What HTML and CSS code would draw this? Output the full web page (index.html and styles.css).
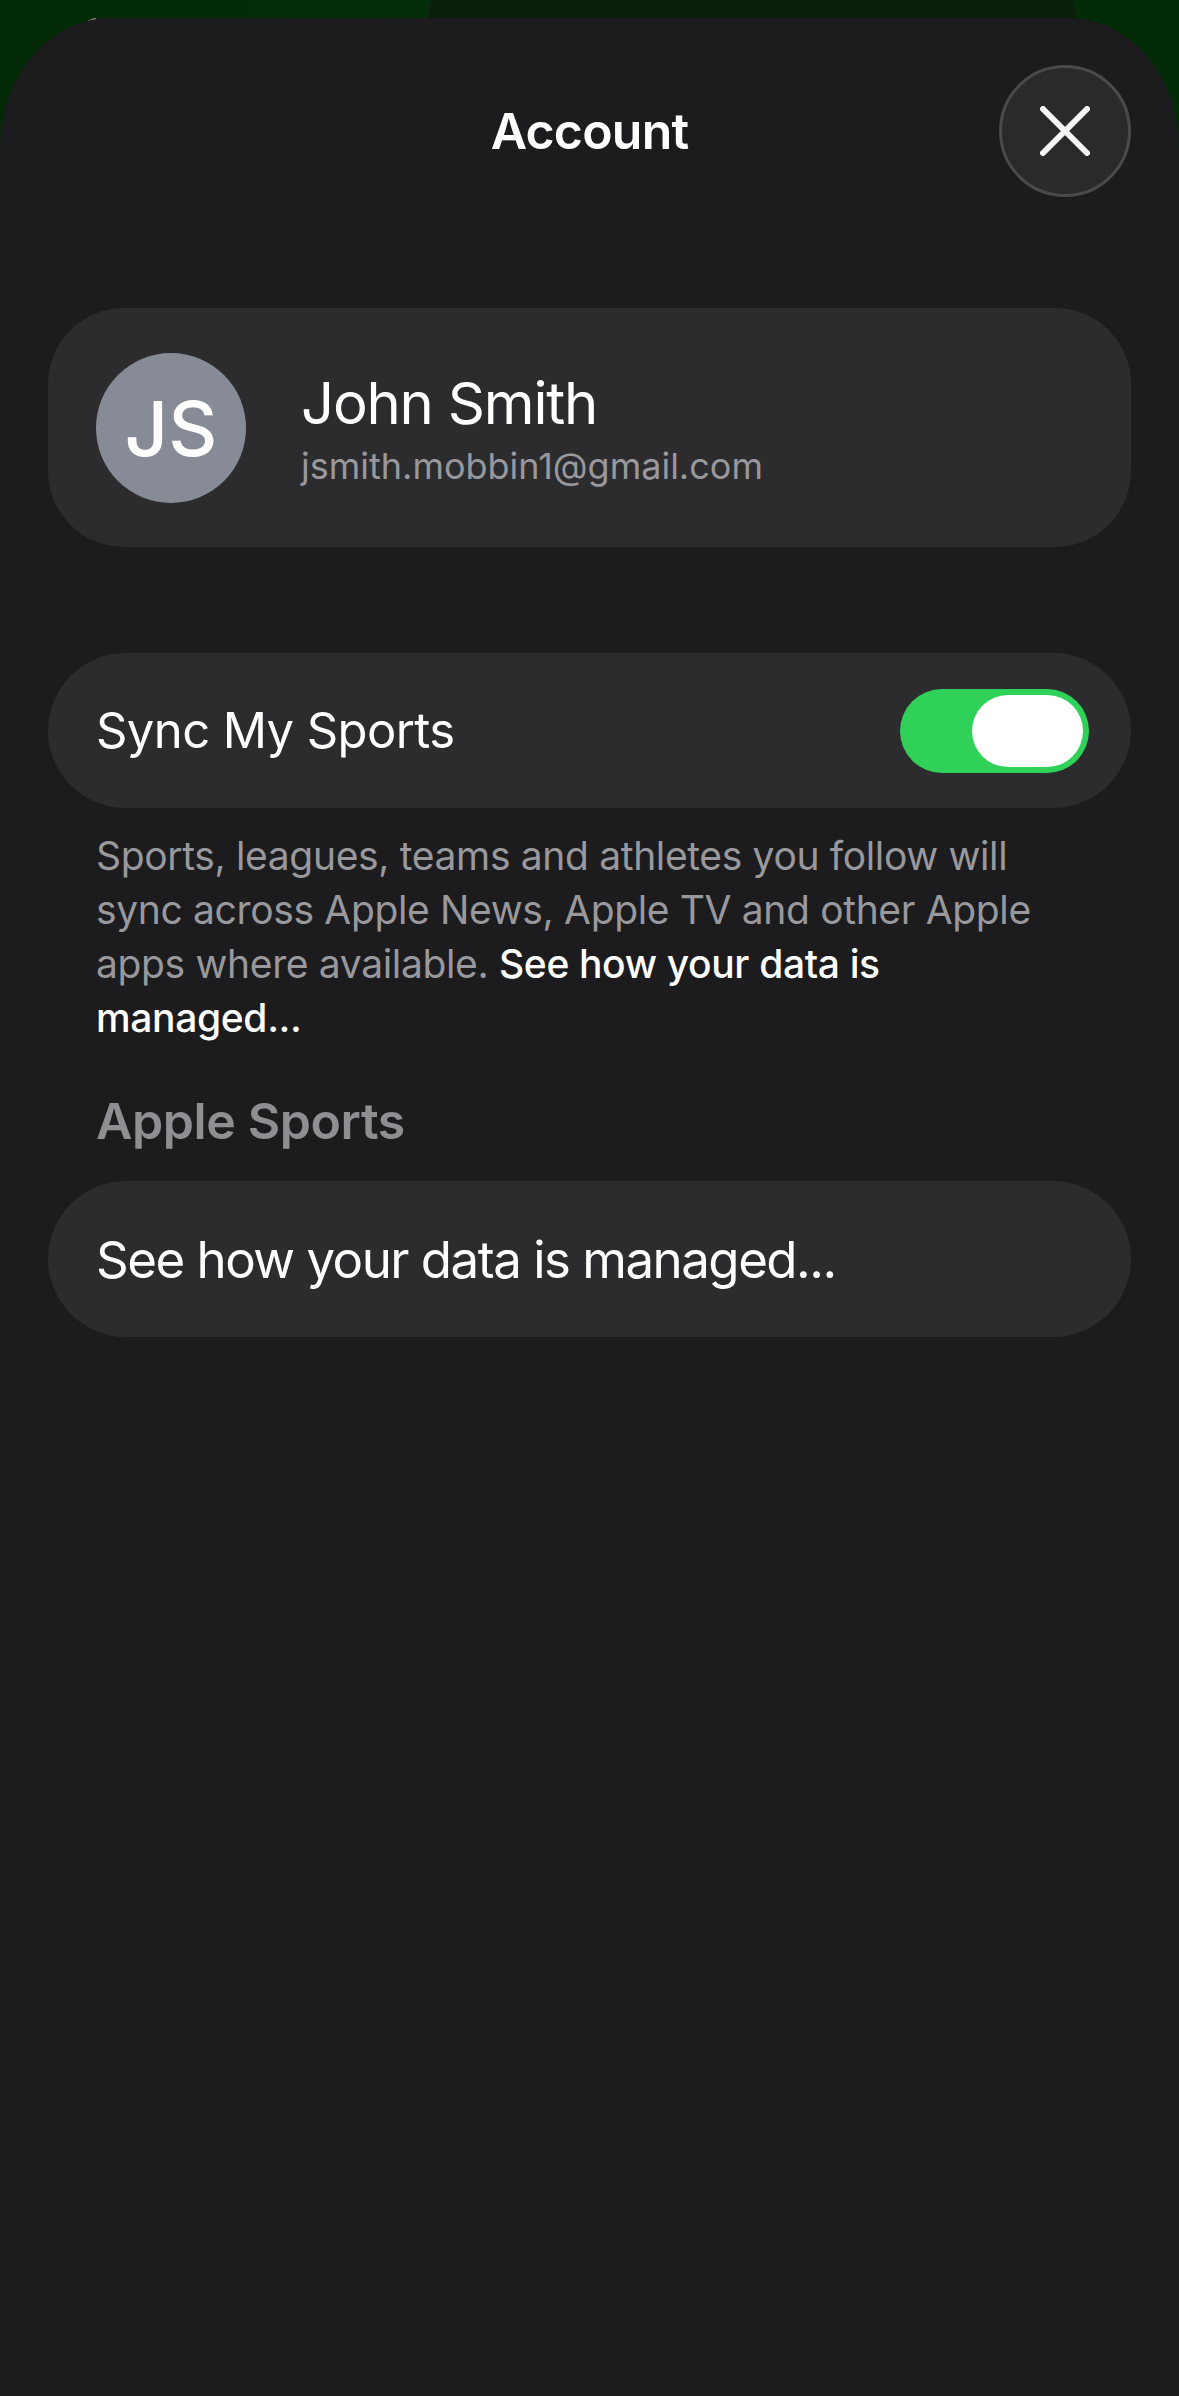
FILE: index.html
```html
<!DOCTYPE html>
<html lang="en">

<head>
  <title>Account</title>
  <meta charset="utf-8">
  <link rel="stylesheet" href="styles.css">
</head>

<body>
  <!-- what shows behind the sheet -->
  <div class="backdrop__shape"></div>
  <div class="backdrop__tick"></div>

  <div class="sheet">
    <div class="sheet__header">
      <h1 class="sheet__title">Account</h1>
      <button class="button__close" aria-label="Close">
        <svg width="50" height="50" viewBox="0 0 50 50">
          <path d="M3 3 L47 47 M47 3 L3 47" stroke="#f5f5f7" stroke-width="6" stroke-linecap="round" fill="none" />
        </svg>
      </button>
    </div>

    <div class="card card__profile">
      <div class="avatar">JS</div>
      <div class="profile__text">
        <div class="profile__name">John Smith</div>
        <div class="profile__email">jsmith.mobbin1@gmail.com</div>
      </div>
    </div>

    <div class="row row__sync">
      <span>Sync My Sports</span>
      <div class="switch">
        <div class="switch__knob"></div>
      </div>
    </div>

    <p class="note">Sports, leagues, teams and athletes you follow will sync across Apple News, Apple TV and other Apple apps where available. <a class="note__link">See how your data is managed...</a></p>

    <h2 class="section__title">Apple Sports</h2>

    <div class="row row__link">See how your data is managed...</div>
  </div>
</body>

</html>
```

FILE: styles.css
```css
* {
  box-sizing: border-box;
}

html,
body {
  height: 100%;
}

body {
  margin: 0px;
  overflow: hidden;
  background: linear-gradient(to right, #022a07, #052e0b 50%, #032b08);
  font-family: Inter, "Noto Sans", sans-serif;
  color: #ffffff;
}

.backdrop__shape {
  position: absolute;
  top: -40px;
  left: 428px;
  width: 648px;
  height: 120px;
  border-radius: 60px;
  background-color: #0a1f0b;
}

.backdrop__tick {
  position: absolute;
  top: 19px;
  left: 88px;
  width: 8px;
  height: 2px;
  background-color: #9a9f9a;
  transform: rotate(-20deg);
}

.sheet {
  position: relative;
  margin-top: 18px;
  height: 2378px;
  padding: 47px 48px 0px 48px;
  background-color: #1c1c1e;
  border-radius: 110px 110px 0px 0px / 130px 130px 0px 0px;
}

.sheet__header {
  position: relative;
  height: 132px;
  margin-bottom: 111px;
  display: flex;
  align-items: center;
  justify-content: center;
}

.sheet__title {
  margin: 0px;
  font-size: 50px;
  font-weight: 600;
  letter-spacing: -0.8px;
}

.button__close {
  position: absolute;
  top: 0px;
  right: 0px;
  width: 132px;
  height: 132px;
  padding: 0px;
  border: 3px solid #4a4a4c;
  border-radius: 50%;
  background-color: #2a2a2c;
  display: flex;
  align-items: center;
  justify-content: center;
}

.card {
  background-color: #2c2c2e;
}

.card__profile {
  height: 239px;
  margin-bottom: 106px;
  padding-left: 48px;
  border-radius: 76px;
  display: flex;
  align-items: center;
  gap: 55px;
}

.avatar {
  width: 150px;
  height: 150px;
  flex-shrink: 0;
  border-radius: 50%;
  background-color: #868b96;
  display: flex;
  align-items: center;
  justify-content: center;
  font-size: 76px;
  font-weight: 500;
}

.profile__name {
  font-size: 58px;
  line-height: 68px;
  letter-spacing: -1.2px;
}

.profile__email {
  margin-top: 8px;
  font-size: 36px;
  line-height: 42px;
  color: #98989d;
}

.row {
  background-color: #2c2c2e;
  border-radius: 78px;
  height: 155px;
  padding: 0px 42px 0px 48px;
  display: flex;
  align-items: center;
  justify-content: space-between;
  font-size: 49px;
  letter-spacing: -0.6px;
}

.switch {
  width: 189px;
  height: 84px;
  padding: 6px;
  border-radius: 42px;
  background-color: #30d158;
  display: flex;
  justify-content: flex-end;
}

.switch__knob {
  width: 111px;
  height: 72px;
  border-radius: 36px;
  background-color: #ffffff;
}

.note {
  margin: 21px 0px 0px 0px;
  padding: 0px 48px;
  font-size: 39px;
  line-height: 54px;
  letter-spacing: -0.35px;
  color: #98989d;
}

.note__link {
  color: #ffffff;
  font-weight: 500;
}

.section__title {
  margin: 46px 0px 0px 0px;
  padding: 0px 48px;
  font-size: 50px;
  line-height: 60px;
  font-weight: 600;
  letter-spacing: -0.4px;
  color: #8e8e93;
}

.row__link {
  margin-top: 30px;
  height: 156px;
  font-size: 51px;
  letter-spacing: -1.5px;
}
```
